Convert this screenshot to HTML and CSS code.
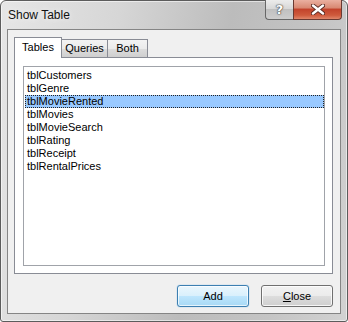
FILE: index.html
```html
<!DOCTYPE html>
<html lang="en">
<head>
    <meta charset="UTF-8">
    <title>Show Table</title>
    <link rel="stylesheet" href="styles.css">
</head>
<body>
    <div class="window">
        <div class="titlebar">
            <span class="title">Show Table</span>
            <div class="caption-btns">
                <div class="cap help">?</div>
                <div class="cap close">
                    <svg width="14" height="11" viewBox="0 0 14 11">
                        <path d="M2 1.5 L12 9.5 M12 1.5 L2 9.5" stroke="#5a2a22" stroke-width="4.2" stroke-linecap="round"/>
                        <path d="M2 1.5 L12 9.5 M12 1.5 L2 9.5" stroke="#fff" stroke-width="2.4" stroke-linecap="round"/>
                    </svg>
                </div>
            </div>
        </div>

        <div class="client">
            <div class="tabs">
                <div class="tab tab-tables active">Tables</div>
                <div class="tab tab-queries">Queries</div>
                <div class="tab tab-both">Both</div>
            </div>

            <div class="panel">
                <ul class="list">
                    <li>tblCustomers</li>
                    <li>tblGenre</li>
                    <li class="selected">tblMovieRented</li>
                    <li>tblMovies</li>
                    <li>tblMovieSearch</li>
                    <li>tblRating</li>
                    <li>tblReceipt</li>
                    <li>tblRentalPrices</li>
                </ul>
            </div>

            <div class="buttons">
                <button class="btn btn-default">Add</button>
                <button class="btn"><u>C</u>lose</button>
            </div>
        </div>
    </div>
</body>
</html>
```

FILE: styles.css
```css
html, body {
    margin: 0;
    padding: 0;
    background: #ffffff;
}

body {
    font-family: "Liberation Sans", Arial, sans-serif;
    font-size: 11px;
    color: #000;
}

.window {
    width: 348px;
    height: 322px;
    box-sizing: border-box;
    border: 1px solid #5c5c5c;
    border-radius: 6px 6px 3px 3px;
    background: linear-gradient(100deg, #e6e6e6 0%, #d6d6d6 30%, #bcbcbc 58%, #c4c4c4 80%, #d2d2d2 100%);
    box-shadow: inset 0 0 0 1px rgba(255, 255, 255, 0.55);
    display: flex;
    flex-direction: column;
}

/* title bar */
.titlebar {
    height: 28px;
    display: flex;
    justify-content: space-between;
    align-items: flex-start;
    padding: 0 5px 0 7px;
}

.title {
    font-size: 12px;
    line-height: 28px;
    color: #111;
    text-shadow: 0 0 6px rgba(255, 255, 255, 0.9);
}

.caption-btns {
    display: flex;
    margin-top: -1px;
}

.cap {
    height: 20px;
    box-sizing: border-box;
    border: 1px solid #676767;
    border-top: none;
    display: flex;
    align-items: center;
    justify-content: center;
}

.help {
    width: 28px;
    border-right: none;
    border-radius: 0 0 0 4px;
    background: linear-gradient(#ececec 0%, #d8d8d8 45%, #c0c0c0 50%, #cdcdcd 100%);
    color: #fff;
    font-family: "DejaVu Sans", sans-serif;
    font-weight: bold;
    font-size: 13px;
    text-shadow: 0 0 1px #444, 0 0 1px #444, 0 0 2px #555;
}

.close {
    width: 49px;
    border-color: #6a3a32;
    border-radius: 0 0 4px 0;
    background: linear-gradient(#eab0a0 0%, #d98a74 40%, #c3442c 50%, #cf5a3c 80%, #e0866a 100%);
}

/* client area */
.client {
    flex: 1;
    margin: 0 6px 7px 6px;
    border: 1px solid #858585;
    background: #f0f0f0;
    padding: 7px 7px 6px 6px;
    display: flex;
    flex-direction: column;
}

.tabs {
    display: flex;
    align-items: flex-end;
    height: 20px;
}

.tab {
    position: relative;
    box-sizing: border-box;
    height: 18px;
    line-height: 17px;
    border: 1px solid #898c95;
    border-bottom: none;
    text-align: center;
    background: linear-gradient(#f3f3f3 0%, #ebebeb 50%, #dddddd 50%, #cfcfcf 100%);
    margin-left: -1px;
}

.tab-tables {
    width: 48px;
    margin-left: 0;
}

.tab-queries {
    width: 47px;
}

.tab-both {
    width: 41px;
}

.tab.active {
    z-index: 1;
    height: 21px;
    line-height: 19px;
    margin-bottom: -1px;
    background: #ffffff;
}

.panel {
    height: 217px;
    box-sizing: border-box;
    border: 1px solid #898c95;
    background: #ffffff;
    padding: 8px 7px 7px 8px;
}

.list {
    list-style: none;
    margin: 0;
    height: 100%;
    box-sizing: border-box;
    border: 1px solid #a0a3a9;
    padding: 2px 0 0 1px;
}

.list li {
    height: 13px;
    line-height: 13px;
    padding-left: 2px;
    white-space: nowrap;
}

.list li.selected {
    background: #99c9ff;
    outline: 1px dotted #222;
    outline-offset: -1px;
}

/* dialog buttons */
.buttons {
    margin-top: 11px;
    display: flex;
    justify-content: flex-end;
    gap: 12px;
}

.btn {
    width: 72px;
    height: 22px;
    padding: 0;
    border: 1px solid #707070;
    border-radius: 3px;
    font-family: inherit;
    font-size: 11px;
    color: #000;
    background: linear-gradient(#f2f2f2 0%, #ebebeb 50%, #dddddd 50%, #cfcfcf 100%);
    box-shadow: inset 0 0 0 1px rgba(255, 255, 255, 0.8);
}

.btn-default {
    border-color: #3c7fb1;
    background: linear-gradient(#eaf6fd 0%, #d9f0fc 50%, #bee6fd 50%, #a7d9f5 100%);
    box-shadow: inset 0 0 0 1px rgba(255, 255, 255, 0.7), 0 0 1px #48a7e7;
}
```
